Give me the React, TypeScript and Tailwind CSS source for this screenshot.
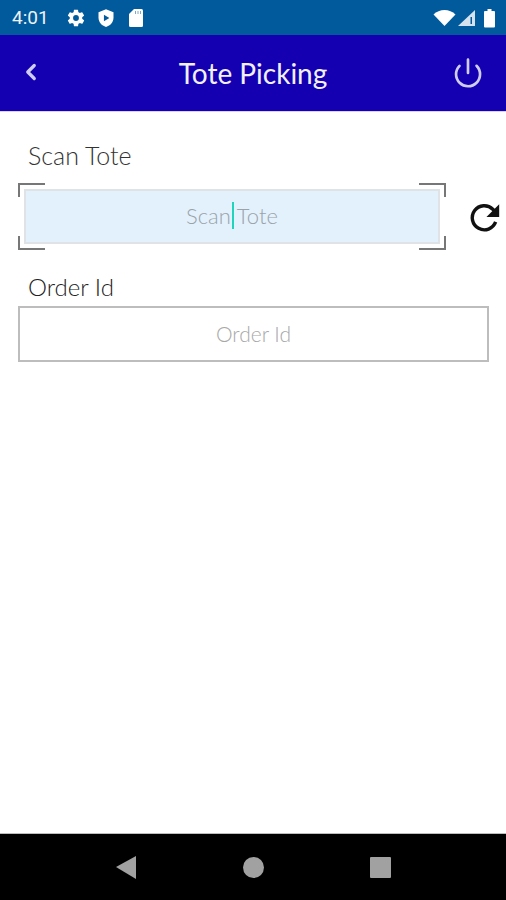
import React from 'react'
import { ChevronLeft, Power } from 'lucide-react'

const font = { fontFamily: 'Lato, "Noto Sans", sans-serif' }

const StatusBar = () => (
  <div className="h-[35px] bg-[#005a9b] flex items-center pl-3 pr-[9px] text-white shrink-0">
    <span className="text-[19px] leading-none font-['Roboto',sans-serif] text-[#eef3f8] w-[43px]">4:01</span>
    <svg width="20" height="20" viewBox="0 0 24 24" fill="#fff" className="ml-[11px]">
      <path d="M19.4 13c.04-.33.06-.66.06-1s-.02-.67-.06-1l2.1-1.65c.2-.15.25-.42.12-.64l-2-3.46c-.12-.22-.38-.3-.6-.22l-2.5 1a7.3 7.3 0 0 0-1.7-1l-.37-2.65A.49.49 0 0 0 14 2h-4c-.25 0-.46.18-.5.42L9.13 5.07c-.6.25-1.17.6-1.7 1l-2.5-1a.49.49 0 0 0-.6.22l-2 3.46c-.13.22-.07.49.12.64L4.55 11c-.04.33-.07.67-.07 1s.03.67.07 1l-2.1 1.65a.5.5 0 0 0-.12.64l2 3.46c.12.22.38.3.6.22l2.5-1c.52.4 1.08.74 1.7 1l.37 2.65c.04.24.25.42.5.42h4c.25 0 .46-.18.5-.42l.37-2.65c.6-.25 1.17-.6 1.7-1l2.5 1c.22.08.48 0 .6-.22l2-3.46a.5.5 0 0 0-.12-.64L19.4 13zM12 15.5a3.5 3.5 0 1 1 0-7 3.5 3.5 0 0 1 0 7z" />
    </svg>
    <svg width="20" height="20" viewBox="0 0 24 24" className="ml-[10px]">
      <path fill="#fff" d="M12 1.5 3 5v6.5c0 5.4 3.8 10 9 11.2 5.2-1.200 9-5.800 9-11.200V5l-9-3.500z" />
      <path fill="#005a9b" d="M9.500 8v8l6.500-4z" />
    </svg>
    <svg width="18" height="20" viewBox="0 0 18 20" className="ml-[11px]">
      <path fill="#fff" d="M7 1h7.500A1.500 1.500 0 0 1 16 2.500v15a1.500 1.500 0 0 1-1.500 1.500h-11A1.500 1.500 0 0 1 2 17.500V6z" />
      <path fill="#7da9c9" d="M8 3h1v3H8zM10.500 3h1v3h-1zM13 3h1v3h-1z" />
    </svg>
    <div className="ml-auto flex items-center gap-[1px]">
      <svg width="23" height="18" viewBox="0 0 23 18">
        <path fill="#fff" d="M11.500 17 0.500 5.500C3.500 2.500 7.300 1 11.500 1s8 1.500 11 4.500z" />
      </svg>
      <svg width="19" height="18" viewBox="0 0 19 18">
        <path fill="#d5e3ee" d="M18 1v16H1z" />
        <path fill="#005a9b" d="M13.500 8h1.500v7h-1.500z" />
      </svg>
      <svg width="14" height="20" viewBox="0 0 14 20" className="ml-[6px]">
        <path fill="#fff" d="M4.500 1h4v2H11a1 1 0 0 1 1 1v14.500a1 1 0 0 1-1 1H2a1 1 0 0 1-1-1V4a1 1 0 0 1 1-1h2.500z" />
      </svg>
    </div>
  </div>
)

const Header = () => (
  <div className="h-[76px] bg-[#1400b0] flex items-center justify-between pl-[18px] pr-[22px] shrink-0">
    <div className="w-[36px] -mt-[3px]">
      <ChevronLeft size={26} strokeWidth={3} className="text-[#cfcdf3]" />
    </div>
    <h1 className="text-[28px] leading-none text-[#f1f0fb] font-normal -mt-[1px]">Tote Picking</h1>
    <Power size={32} strokeWidth={2} className="text-[#cfcdf3] -mt-[1px]" />
  </div>
)

const Corner = ({ className }: { className: string }) => (
  <span className={`absolute w-[27px] h-[14px] border-[#777] ${className}`} />
)

const NavBar = () => (
  <div className="h-[67px] bg-black border-t border-[#bdbdbd] flex items-center justify-between pl-[115px] pr-[115px] shrink-0">
    <svg width="22" height="24" viewBox="0 0 22 24">
      <path fill="#a1a1a1" d="M21 1v23L1 12z" />
    </svg>
    <span className="w-[21px] h-[21px] rounded-full bg-[#a1a1a1]" />
    <span className="w-[21px] h-[21px] rounded-[1px] bg-[#a1a1a1]" />
  </div>
)

export default function App() {
  return (
    <div className="w-[506px] h-[900px] flex flex-col bg-white overflow-hidden" style={font}>
      <StatusBar />
      <Header />
      <div className="flex-1 border-t border-[#d6d3f5] px-[18px] pt-[28px]">
        <label className="block pl-[10px] text-[25px] leading-[30px] font-light text-[#333]">Scan Tote</label>
        <div className="flex items-center mt-[13px]">
          <div className="relative w-[428px] h-[67px] p-[6px] shrink-0">
            <Corner className="top-0 left-0 border-t-2 border-l-2" />
            <Corner className="top-0 right-0 border-t-2 border-r-2" />
            <Corner className="bottom-0 left-0 border-b-2 border-l-2" />
            <Corner className="bottom-0 right-0 border-b-2 border-r-2" />
            <div className="h-[55px] bg-[#e3f1fd] border-2 border-[#dfe3e6] flex items-center justify-center pb-[2px] text-[22px] font-light text-[#9aa3a8]">
              <span>Scan</span>
              <span className="w-[2px] h-[27px] bg-[#1fd3bd] mx-[1px]" />
              <span className="ml-[2px]">Tote</span>
            </div>
          </div>
          <svg width="34" height="34" viewBox="0 0 24 24" className="ml-[22px] shrink-0">
            <path fill="none" stroke="#111" strokeWidth="2.400" d="M19.500 15.500A8.500 8.500 0 1 1 17.500 6.500L20 9" />
            <path fill="#111" d="M22 3v9h-9z" />
          </svg>
        </div>
        <label className="block pl-[10px] mt-[22px] text-[24px] leading-[30px] font-light text-[#222]">Order Id</label>
        <div className="mt-[4px] h-[56px] w-[471px] border-2 border-[#bdbdbd] flex items-center justify-center text-[21px] font-light text-[#a8a8a8]">
          Order Id
        </div>
      </div>
      <NavBar />
    </div>
  )
}
